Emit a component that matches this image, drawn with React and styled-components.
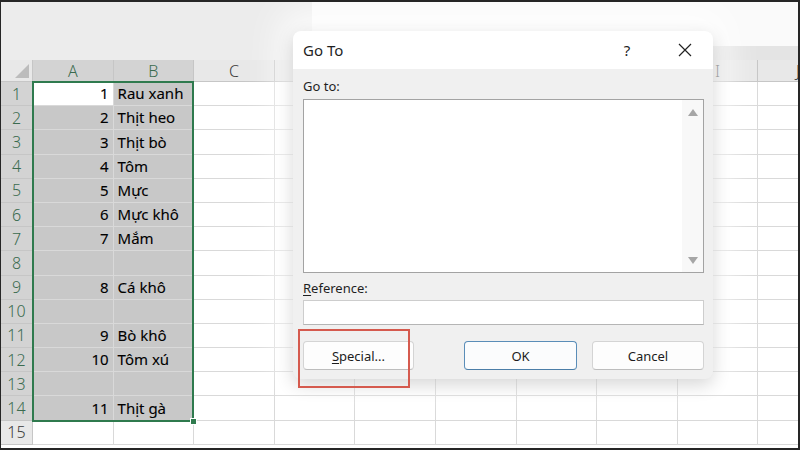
import React from 'react'
import styled, { createGlobalStyle } from 'styled-components'

const GlobalStyle = createGlobalStyle`
    * { box-sizing: border-box; }
    body {
        margin: 0;
        font-family: "Noto Sans", "Liberation Sans", sans-serif;
        background: #fff;
    }
`

const Screen = styled.div`
    position: relative;
    width: 800px;
    height: 450px;
    overflow: hidden;
    border-top: 2px solid #262626;
    border-left: 1px solid #262626;
    border-right: 2px solid #262626;
    border-bottom: 2px solid #262626;
    background: #fff;
`

const Sheet = styled.div`
    display: grid;
    grid-template-columns: 32px repeat(10, 80.6px);
    grid-template-rows: 58px 22px repeat(15, 24.2px);
    font-family: "Noto Sans", "Liberation Sans", sans-serif;
`

const TopBand = styled.div`
    grid-column: 1 / -1;
    grid-row: 1;
    display: flex;
`

const TopLeft = styled.div`
    width: 311px;
    background: #ececec;
`

const TopRight = styled.div`
    flex: 1;
    background: linear-gradient(to bottom, #fafafa 0, #fafafa 44px, #e4e4e4 44px);
`

const Corner = styled.div`
    grid-row: 2;
    grid-column: 1;
    position: relative;
    background: #e8e8e8;
    border-right: 1px solid #c6c6c6;
    border-bottom: 1px solid #c6c6c6;

    &::after {
        content: '';
        position: absolute;
        right: 3px;
        bottom: 3px;
        border-style: solid;
        border-width: 0 0 14px 14px;
        border-color: transparent transparent #bcbcbc transparent;
    }
`

const ColHead = styled.div`
    grid-row: 2;
    grid-column: ${p => p.$c};
    display: flex;
    align-items: center;
    justify-content: center;
    background: ${p => (p.$sel ? '#d3d3d3' : '#e8e8e8')};
    color: ${p => (p.$sel ? '#3a6b4f' : '#3a3a3a')};
    border-right: 1px solid #c6c6c6;
    border-bottom: 1px solid ${p => (p.$sel ? '#2f7a4e' : '#c6c6c6')};
    font-size: 16px;
    font-weight: 300;
    padding-top: 1px;
`

const RowHead = styled.div`
    grid-row: ${p => p.$r};
    grid-column: 1;
    display: flex;
    align-items: center;
    justify-content: center;
    background: ${p => (p.$sel ? '#d3d3d3' : '#e8e8e8')};
    color: ${p => (p.$sel ? '#3a6b4f' : '#3a3a3a')};
    border-right: 1px solid ${p => (p.$sel ? '#2f7a4e' : '#c6c6c6')};
    border-bottom: 1px solid #c6c6c6;
    font-size: 16px;
    font-weight: 300;
`

const Cell = styled.div`
    grid-row: ${p => p.$r};
    grid-column: ${p => p.$c};
    display: flex;
    align-items: flex-end;
    justify-content: ${p => (p.$num ? 'flex-end' : 'flex-start')};
    padding: 0 4px 2px 4px;
    background: ${p => (p.$sel ? '#c8c8c8' : '#fff')};
    border-right: 1px solid #d9d9d9;
    border-bottom: 1px solid #d9d9d9;
    font-size: 15px;
    color: #000;
    -webkit-text-stroke: 0.1px #000;
    white-space: nowrap;
    overflow: hidden;
    line-height: 20px;
`

const Selection = styled.div`
    grid-column: 2 / 4;
    grid-row: 3 / 17;
    position: relative;
    margin: -1px 0 -1px -1px;
    border: 2px solid #2f7a4e;
    pointer-events: none;
`

const FillHandle = styled.span`
    position: absolute;
    right: -5px;
    bottom: -5px;
    width: 7px;
    height: 7px;
    background: #2f7a4e;
    border: 1px solid #fff;
`

const Dialog = styled.div`
    position: absolute;
    left: 292px;
    top: 29px;
    width: 420px;
    height: 348px;
    display: flex;
    flex-direction: column;
    background: #f0f0f0;
    border-radius: 8px;
    overflow: hidden;
    font-family: "Noto Sans", "Liberation Sans", sans-serif;
    color: #1f1f1f;
    box-shadow: 0 6px 18px rgba(0, 0, 0, 0.16), 0 -8px 36px 14px rgba(255, 255, 255, 0.8);
`

const TitleBar = styled.div`
    height: 38px;
    flex: none;
    display: flex;
    align-items: center;
    padding-left: 10px;
    background: #fff;
`

const Title = styled.div`
    flex: 1;
    font-size: 15px;
`

const TitleButton = styled.div`
    width: 44px;
    height: 38px;
    margin-right: ${p => p.$end || 0}px;
    display: flex;
    align-items: center;
    justify-content: center;
    font-size: 15px;
    color: #222;
`

const Body = styled.div`
    flex: 1;
    display: flex;
    flex-direction: column;
    padding: 8px 9px 0 10px;
`

const Label = styled.div`
    font-size: 13px;
    line-height: 18px;
    margin-bottom: ${p => p.$gap || 4}px;
    margin-top: ${p => p.$top || 0}px;

    u { text-decoration-thickness: 1px; text-underline-offset: 2px; }
`

const ListBox = styled.div`
    height: 174px;
    display: flex;
    background: #fff;
    border: 1px solid #a3a3a3;
`

const ListArea = styled.div`
    flex: 1;
`

const ScrollTrack = styled.div`
    width: 21px;
    display: flex;
    flex-direction: column;
    justify-content: space-between;
    align-items: center;
    padding: 9px 0 8px;
    background: #f8f8f8;
`

const Arrow = styled.span`
    width: 0;
    height: 0;
    border-left: 5px solid transparent;
    border-right: 5px solid transparent;
    ${p => (p.$down ? 'border-top: 7px solid #a6a6a6;' : 'border-bottom: 7px solid #a6a6a6;')}
`

const TextInput = styled.div`
    height: 25px;
    background: #fff;
    border: 1px solid #cdcdcd;
    border-bottom-color: #b5b5b5;
`

const ButtonRow = styled.div`
    display: flex;
    justify-content: space-between;
    margin-top: 16px;
`

const ButtonGroup = styled.div`
    display: flex;
    gap: 15px;
`

const Button = styled.div`
    width: ${p => p.$w || 112}px;
    height: 29px;
    display: flex;
    align-items: center;
    justify-content: center;
    font-size: 13px;
    color: #1c1c1c;
    background: ${p => (p.$primary ? '#fbfcfd' : '#fdfdfd')};
    border: 1px solid ${p => (p.$primary ? '#5a8db8' : '#d4d4d4')};
    border-bottom-color: ${p => (p.$primary ? '#4b7ea8' : '#bdbdbd')};
    border-radius: 4px;

    u { text-decoration-thickness: 1px; text-underline-offset: 2px; }
`

const Highlight = styled.div`
    position: absolute;
    left: 297px;
    top: 327px;
    width: 112px;
    height: 59px;
    border: 2px solid #d55a4e;
    pointer-events: none;
`

const colLetters = ['A', 'B', 'C', 'D', 'E', 'F', 'G', 'H', 'I', 'J']

const rows = [
    ['1', 'Rau xanh'],
    ['2', 'Thịt heo'],
    ['3', 'Thịt bò'],
    ['4', 'Tôm'],
    ['5', 'Mực'],
    ['6', 'Mực khô'],
    ['7', 'Mắm'],
    ['', ''],
    ['8', 'Cá khô'],
    ['', ''],
    ['9', 'Bò khô'],
    ['10', 'Tôm xú'],
    ['', ''],
    ['11', 'Thịt gà'],
    ['', ''],
]

const CloseIcon = () => (
    <svg width="14" height="14" viewBox="0 0 14 14">
        <path d="M1 1 L13 13 M13 1 L1 13" stroke="#222" strokeWidth="1.2" fill="none" />
    </svg>
)

function App() {
    return (
        <Screen>
            <GlobalStyle />
            <Sheet>
                <TopBand>
                    <TopLeft />
                    <TopRight />
                </TopBand>

                <Corner />
                {colLetters.map((c, i) => (
                    <ColHead key={c} $c={i + 2} $sel={i < 2}>{c}</ColHead>
                ))}

                {rows.map((r, ri) => {
                    const inRange = ri < 14
                    const gridRow = ri + 3
                    return (
                        <React.Fragment key={ri}>
                            <RowHead $r={gridRow} $sel={inRange}>{ri + 1}</RowHead>
                            {colLetters.map((c, ci) => {
                                const sel = inRange && ci < 2 && !(ri === 0 && ci === 0)
                                let text = ''
                                if (ci === 0) text = r[0]
                                if (ci === 1) text = r[1]
                                return (
                                    <Cell key={c} $r={gridRow} $c={ci + 2} $sel={sel} $num={ci === 0}>
                                        {text}
                                    </Cell>
                                )
                            })}
                        </React.Fragment>
                    )
                })}

                <Selection>
                    <FillHandle />
                </Selection>
            </Sheet>

            <Dialog>
                <TitleBar>
                    <Title>Go To</Title>
                    <TitleButton $end={14}>?</TitleButton>
                    <TitleButton $end={6}>
                        <CloseIcon />
                    </TitleButton>
                </TitleBar>
                <Body>
                    <Label>Go to:</Label>
                    <ListBox>
                        <ListArea />
                        <ScrollTrack>
                            <Arrow />
                            <Arrow $down />
                        </ScrollTrack>
                    </ListBox>
                    <Label $top={6} $gap={3}>
                        <u>R</u>eference:
                    </Label>
                    <TextInput />
                    <ButtonRow>
                        <Button $w={111}>
                            <u>S</u>pecial...
                        </Button>
                        <ButtonGroup>
                            <Button $primary $w={113}>OK</Button>
                            <Button $w={112}>Cancel</Button>
                        </ButtonGroup>
                    </ButtonRow>
                </Body>
            </Dialog>

            <Highlight />
        </Screen>
    )
}

export default App
